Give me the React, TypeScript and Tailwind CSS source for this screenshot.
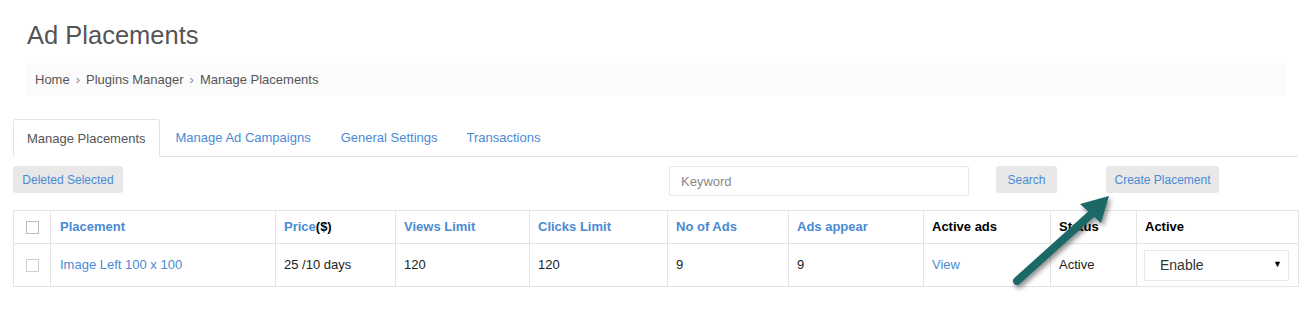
import React from "react";

const cols = [37, 225, 120, 134, 138, 121, 135, 127, 86, 162];

export default function App() {
  const blue = "text-[#4a8ad4]";
  const cell = "border border-[#e4e4e4]";
  return (
    <div
      className="relative w-[1302px] h-[335px] bg-white text-[13px] text-[#333]"
      style={{ fontFamily: '"Liberation Sans", Arial, sans-serif' }}
    >
      <div className="px-[13px] pt-[20px]">
        <div className="pl-[14px]">
          <h1 className="text-[25.5px] leading-[30px] text-[#555] font-normal">Ad Placements</h1>
          <div className="mt-[13px] w-[1258px] h-[33px] bg-[#fbfbfb] flex items-center pl-[8px] pt-[1px] text-[#555] text-[13px]">
            <span>Home</span>
            <span className="mx-[6px] text-[#888] text-[13px]">›</span>
            <span>Plugins Manager</span>
            <span className="mx-[6px] text-[#888] text-[13px]">›</span>
            <span>Manage Placements</span>
          </div>
        </div>

        {/* Tabs */}
        <div className="mt-[23px] flex items-end border-b border-[#e3e3e3] w-[1285px] h-[38px]">
          <div className="h-[38px] -mb-px px-[13px] pt-[2px] flex items-center border border-[#e3e3e3] border-b-white bg-white text-[#555] rounded-t-[3px]">
            Manage Placements
          </div>
          <div className={`h-[38px] pt-[2px] flex items-center pl-[16px] ${blue}`}>Manage Ad Campaigns</div>
          <div className={`h-[38px] pt-[2px] flex items-center pl-[30px] ${blue}`}>General Settings</div>
          <div className={`h-[38px] pt-[2px] flex items-center pl-[29px] ${blue}`}>Transactions</div>
        </div>

        {/* Controls */}
        <div className="mt-[9px] flex items-start h-[30px]">
          <button className={`h-[27px] w-[110px] bg-[#e8e8e8] rounded-[3px] text-[12px] ${blue}`}>Deleted Selected</button>
          <div className="ml-[546px] w-[300px] h-[30px] border border-[#e6e6e6] rounded-[2px] flex items-center pl-[11px] pt-[1px] text-[#888] text-[13px]">
            Keyword
          </div>
          <button className={`ml-[27px] h-[27px] w-[61px] bg-[#e8e8e8] rounded-[3px] text-[12px] ${blue}`}>Search</button>
          <button className={`ml-[49px] h-[27px] w-[113px] bg-[#e8e8e8] rounded-[3px] text-[12px] ${blue}`}>Create Placement</button>
        </div>

        {/* Table */}
        <table className="mt-[14px] border-collapse table-fixed w-[1285px]">
          <colgroup>
            {cols.map((w, i) => (
              <col key={i} style={{ width: w }} />
            ))}
          </colgroup>
          <thead>
            <tr className="h-[33px] font-bold text-[13px]">
              <th className={`${cell} text-left pl-[12px]`}>
                <div className="w-[13px] h-[13px] border border-[#bdbdbd] bg-white" />
              </th>
              <th className={`${cell} text-left pl-[9px] ${blue}`}>Placement</th>
              <th className={`${cell} text-left pl-[8px]`}>
                <span className="text-[#4a8ad4]">Price</span>
                <span className="text-black">($)</span>
              </th>
              <th className={`${cell} text-left pl-[8px] ${blue}`}>Views Limit</th>
              <th className={`${cell} text-left pl-[8px] ${blue}`}>Clicks Limit</th>
              <th className={`${cell} text-left pl-[8px] ${blue}`}>No of Ads</th>
              <th className={`${cell} text-left pl-[8px] ${blue}`}>Ads appear</th>
              <th className={`${cell} text-left pl-[8px] text-black`}>Active ads</th>
              <th className={`${cell} text-left pl-[8px] text-black`}>Status</th>
              <th className={`${cell} text-left pl-[8px] text-black`}>Active</th>
            </tr>
          </thead>
          <tbody>
            <tr className="h-[43px] text-[13px] text-[#222]">
              <td className={`${cell} pl-[12px]`}>
                <div className="w-[13px] h-[13px] border border-[#cfcfcf] bg-white" />
              </td>
              <td className={`${cell} pl-[9px] ${blue}`}>Image Left 100 x 100</td>
              <td className={`${cell} pl-[8px]`}>25 /10 days</td>
              <td className={`${cell} pl-[8px]`}>120</td>
              <td className={`${cell} pl-[8px]`}>120</td>
              <td className={`${cell} pl-[8px]`}>9</td>
              <td className={`${cell} pl-[8px]`}>9</td>
              <td className={`${cell} pl-[8px] ${blue}`}>View</td>
              <td className={`${cell} pl-[8px]`}>Active</td>
              <td className={`${cell} pl-[7px]`}>
                <div className="w-[145px] h-[31px] border border-[#e8e8e8] flex items-center justify-between pl-[15px] pr-[6px] text-[14px] text-[#333]">
                  <span>Enable</span>
                  <span className="text-[9px] text-black">▼</span>
                </div>
              </td>
            </tr>
          </tbody>
        </table>
      </div>

      {/* Annotation arrow */}
      <svg className="absolute left-0 top-0 pointer-events-none" width="1302" height="335">
        <defs>
          <filter id="sh" x="-20%" y="-20%" width="140%" height="140%">
            <feDropShadow dx="2" dy="3" stdDeviation="2.5" floodColor="#000" floodOpacity="0.45" />
          </filter>
        </defs>
        <g filter="url(#sh)">
          <line x1="1017" y1="281" x2="1097" y2="209" stroke="#1d6766" strokeWidth="8" strokeLinecap="round" />
          <polygon points="1109,196 1080,204 1101,223" fill="#1d6766" />
        </g>
      </svg>
    </div>
  );
}
